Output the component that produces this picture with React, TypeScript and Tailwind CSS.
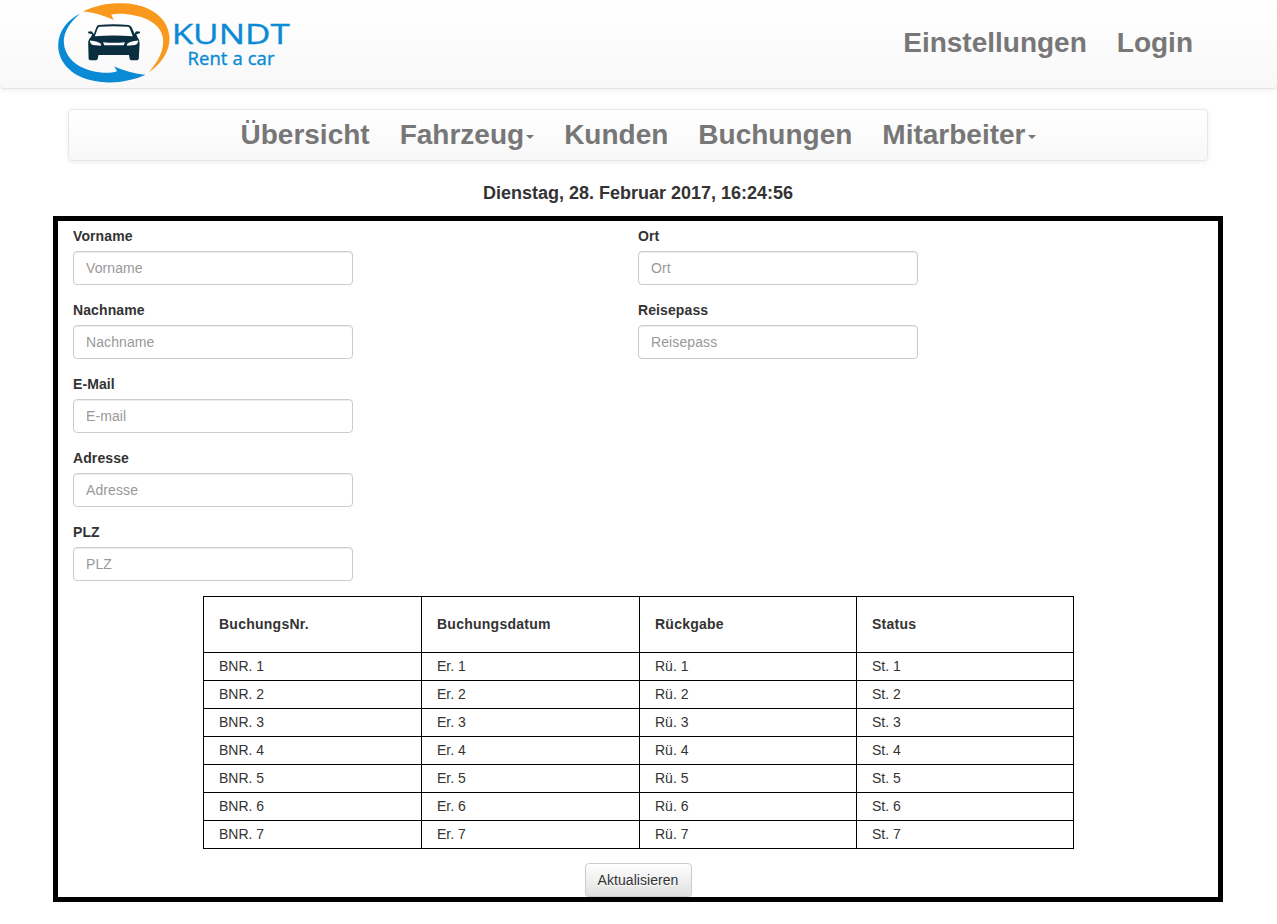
import React from "react";

const rows = [1, 2, 3, 4, 5, 6, 7];

function Logo() {
  return (
    <svg width="250" height="88" viewBox="50 0 250 88" className="block" role="img" aria-label="Kundt Rent a car">
      <path
        fill="#f8991d"
        d="M83 11.5C96 5 110 2.6 124 3.3C150 4.5 169 18 169.5 38C169.7 52 161 64 148.5 72.5C158 62 164.500 50 163 38C161 25 148 16.500 127 14.200C121 13.500 115 14 111.300 14.800L113.700 20C107 17 96 12.500 83 11.500Z"
      />
      <path
        fill="#0a89d4"
        d="M80 13.500C68 24 61.500 35 64.500 47C68 62 83 70.500 101 72.500C107 73 113 72.600 117 71.200L114.300 66.200C122 70 133 73.500 145.500 74.800C130 82 108 85 90 80C70 75 58 61 58.200 45C58.500 31 67 20.500 80 13.500Z"
      />
      <path
        fill="#0a2d3f"
        fillRule="evenodd"
        d="M98.500 24.900Q113.500 23.800 128.500 24.900Q131 25.300 132 28L134.700 34L135.300 32.300Q136 31.200 138 31.400L140.200 31.700L139.800 33.300L136.300 34.200L137.300 37Q139.600 39.500 139.600 43.500L138.800 58.500Q138.600 60.200 137 60.200H131.300Q129.800 60.200 129.600 58.500L129 55H98.500L97.800 58.500Q97.500 60.200 96 60.200H90.200Q88.800 60.200 88.600 58.500L88.200 43.500Q88 39.500 91 37L92.200 34.200L88.300 33.200L88 31.700L91 31.200Q92.700 31.300 93.200 33.700L94 33.500L96.300 27.500Q97 25.200 98.500 24.900ZM99.300 26.800Q98.200 27 97.500 29L94.800 36.300Q113 34.600 132.700 36.300L130 29Q129.300 27 128.300 26.800Q113.500 25.700 99.300 26.800ZM89.900 40.500Q90.200 44.400 93 45L100.500 45.800Q101.600 45.500 100.800 43.700Q98.500 41.500 89.900 40.500ZM138.300 40.500Q137.900 44.400 135 45L127.500 45.800Q126.500 45.500 127.200 43.700Q129.500 41.500 138.300 40.500ZM103 42.300L104.300 45.200H123.700L125 42.300Q114 43.400 103 42.300Z"
      />
      <g fill="#0a89d4" stroke="#0a89d4" strokeWidth="0.35" fontFamily="'Open Sans', sans-serif">
        <text x="171.700" y="44" fontSize="27.500" textLength="118" lengthAdjust="spacingAndGlyphs">
          KUNDT
        </text>
        <text x="187.500" y="64.800" fontSize="18.500" textLength="87" lengthAdjust="spacing">
          Rent a car
        </text>
      </g>
    </svg>
  );
}

function NavLink({ label, caret = false }: { label: string; caret?: boolean }) {
  return (
    <a href="#" className="flex items-center px-[15px] text-[28px] leading-5 font-bold text-[#777]">
      {label}
      {caret && <span className="mt-1 ml-0.5 border-x-4 border-t-4 border-x-transparent border-t-[#777]" />}
    </a>
  );
}

function Field({ label, placeholder }: { label: string; placeholder: string }) {
  return (
    <label className="mb-[15px] block w-[280px]">
      <span className="mb-[5px] block font-bold tracking-[0.1px]">{label}</span>
      <input
        type="text"
        placeholder={placeholder}
        className="block h-[34px] w-full rounded border border-[#ccc] bg-white px-3 py-1.5 tracking-[0.1px] shadow-[inset_0_1px_1px_rgba(0,0,0,0.075)] placeholder:text-[#999]"
      />
    </label>
  );
}

export default function App() {
  return (
    <div className="min-h-[924px] bg-white font-['Liberation_Sans',Arial,sans-serif] text-sm leading-5 text-[#333]">
      <header className="flex h-[89px] justify-between rounded-b border-b border-[#e5e5e5] bg-linear-to-b from-white to-[#f8f8f8] pr-[69px] pl-[50px] shadow-[0_1px_5px_rgba(0,0,0,0.075)]">
        <Logo />
        <nav className="flex h-[85px] items-center">
          <NavLink label="Einstellungen" />
          <NavLink label="Login" />
        </nav>
      </header>

      <nav className="mt-5 ml-[68px] flex h-[52px] w-[1140px] justify-center rounded border border-[#e7e7e7] bg-linear-to-b from-white to-[#f8f8f8] shadow-[0_1px_5px_rgba(0,0,0,0.075)]">
        <NavLink label="Übersicht" />
        <NavLink label="Fahrzeug" caret />
        <NavLink label="Kunden" />
        <NavLink label="Buchungen" />
        <NavLink label="Mitarbeiter" caret />
      </nav>

      <p className="mt-[22px] pr-px text-center text-lg leading-5 font-bold">Dienstag, 28. Februar 2017, 16:24:56</p>

      <main className="mt-[13px] ml-[53px] h-[686px] w-[1170px] border-5 border-black px-[15px] pt-[5px]">
        <div className="grid grid-cols-2">
          <div>
            <Field label="Vorname" placeholder="Vorname" />
            <Field label="Nachname" placeholder="Nachname" />
            <Field label="E-Mail" placeholder="E-mail" />
            <Field label="Adresse" placeholder="Adresse" />
            <Field label="PLZ" placeholder="PLZ" />
          </div>
          <div>
            <Field label="Ort" placeholder="Ort" />
            <Field label="Reisepass" placeholder="Reisepass" />
          </div>
        </div>

        <div className="ml-[130px] w-[871px] border-t border-l border-black">
          <div className="grid h-14 grid-cols-[218px_218px_217px_217px] font-bold tracking-[0.25px]">
            {["BuchungsNr.", "Buchungsdatum", "Rückgabe", "Status"].map((title) => (
              <div key={title} className="flex items-center border-r border-b border-black px-[15px] pb-0.5">
                {title}
              </div>
            ))}
          </div>
          {rows.map((n) => (
            <div key={n} className="grid h-7 grid-cols-[218px_218px_217px_217px]">
              {["BNR.", "Er.", "Rü.", "St."].map((prefix) => (
                <div key={prefix} className="border-r border-b border-black px-[15px] pt-[3px]">
                  {prefix} {n}
                </div>
              ))}
            </div>
          ))}
        </div>

        <div className="mt-3.5 flex justify-center">
          <button
            type="button"
            className="h-[34px] w-[107px] rounded border border-[#ccc] bg-linear-to-b from-white to-[#e0e0e0] text-center tracking-[0.05px] [text-shadow:0_1px_0_#fff] shadow-[inset_0_1px_0_rgba(255,255,255,0.15),0_1px_1px_rgba(0,0,0,0.075)]"
          >
            Aktualisieren
          </button>
        </div>
      </main>
    </div>
  );
}
